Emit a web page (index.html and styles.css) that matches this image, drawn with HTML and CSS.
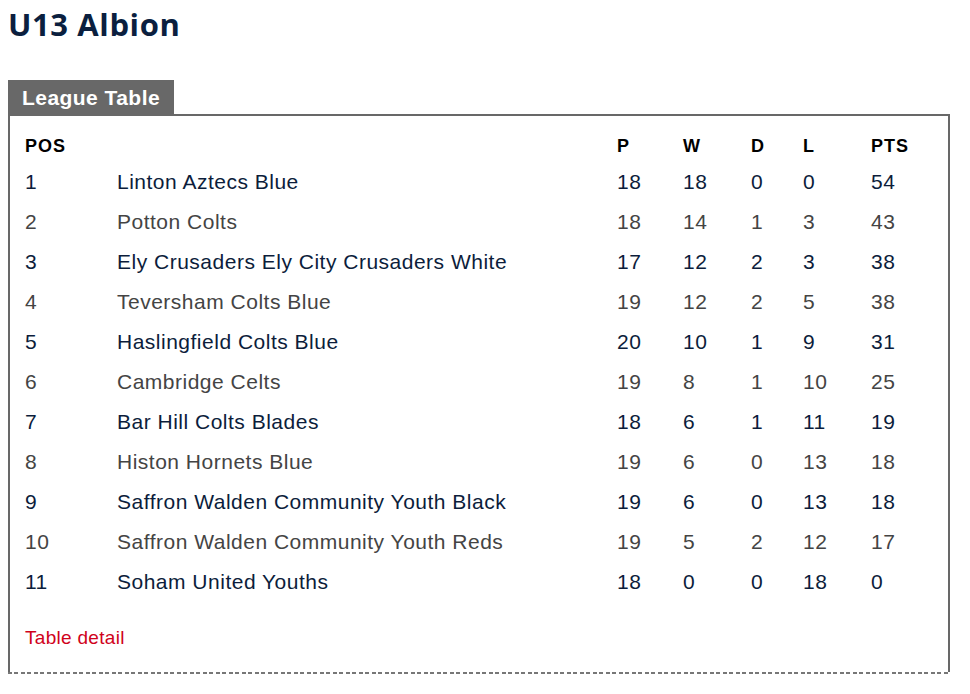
FILE: index.html
```html
<!DOCTYPE html>
<html lang="en">
<head>
<meta charset="utf-8">
<title>U13 Albion</title>
<link rel="stylesheet" href="styles.css">
</head>
<body>
<h1 class="page-title">U13 Albion</h1>
<section class="league">
  <div class="league-tab">League Table</div>
  <div class="league-box">
    <table class="league-table">
      <colgroup>
        <col class="c-pos"><col class="c-team"><col class="c-p"><col class="c-w"><col class="c-d"><col class="c-l"><col class="c-pts">
      </colgroup>
      <thead>
        <tr><th>POS</th><th></th><th>P</th><th>W</th><th>D</th><th>L</th><th>PTS</th></tr>
      </thead>
      <tbody>
        <tr class="odd"><td>1</td><td>Linton Aztecs Blue</td><td>18</td><td>18</td><td>0</td><td>0</td><td>54</td></tr>
        <tr class="even"><td>2</td><td>Potton Colts</td><td>18</td><td>14</td><td>1</td><td>3</td><td>43</td></tr>
        <tr class="odd"><td>3</td><td>Ely Crusaders Ely City Crusaders White</td><td>17</td><td>12</td><td>2</td><td>3</td><td>38</td></tr>
        <tr class="even"><td>4</td><td>Teversham Colts Blue</td><td>19</td><td>12</td><td>2</td><td>5</td><td>38</td></tr>
        <tr class="odd"><td>5</td><td>Haslingfield Colts Blue</td><td>20</td><td>10</td><td>1</td><td>9</td><td>31</td></tr>
        <tr class="even"><td>6</td><td>Cambridge Celts</td><td>19</td><td>8</td><td>1</td><td>10</td><td>25</td></tr>
        <tr class="odd"><td>7</td><td>Bar Hill Colts Blades</td><td>18</td><td>6</td><td>1</td><td>11</td><td>19</td></tr>
        <tr class="even"><td>8</td><td>Histon Hornets Blue</td><td>19</td><td>6</td><td>0</td><td>13</td><td>18</td></tr>
        <tr class="odd"><td>9</td><td>Saffron Walden Community Youth Black</td><td>19</td><td>6</td><td>0</td><td>13</td><td>18</td></tr>
        <tr class="even"><td>10</td><td>Saffron Walden Community Youth Reds</td><td>19</td><td>5</td><td>2</td><td>12</td><td>17</td></tr>
        <tr class="odd"><td>11</td><td>Soham United Youths</td><td>18</td><td>0</td><td>0</td><td>18</td><td>0</td></tr>
      </tbody>
    </table>
    <a class="detail-link" href="#">Table detail</a>
  </div>
  <div class="league-dash"></div>
</section>
</body>
</html>
```

FILE: styles.css
```css
html, body {
  margin: 0;
  padding: 0;
  background: #ffffff;
}

body {
  padding: 0 8px;
  font-family: "Liberation Sans", Arial, sans-serif;
}

.page-title {
  margin: 4px 0 0;
  font-family: "Open Sans", "Liberation Sans", sans-serif;
  font-weight: 700;
  font-size: 31px;
  line-height: 40px;
  color: #0b1f3f;
  letter-spacing: 0.6px;
}

.league {
  margin-top: 36px;
  margin-right: 12px;
}

.league-tab {
  display: inline-block;
  vertical-align: top;
  background: #686868;
  color: #ffffff;
  font-weight: 700;
  font-size: 21px;
  line-height: 33px;
  padding: 1px 14px 0 14px;
  letter-spacing: 0.45px;
}

.league-box {
  border: 2px solid #686868;
  border-bottom: 0;
  padding: 9px 15px 23px 15px;
}

.league-dash {
  height: 2px;
  background: repeating-linear-gradient(90deg, #777777 0 4px, transparent 4px 6.5px);
}

.league-table {
  border-collapse: collapse;
  table-layout: fixed;
  width: 910px;
}

.c-pos { width: 92px; }
.c-team { width: 500px; }
.c-p { width: 66px; }
.c-w { width: 68px; }
.c-d { width: 52px; }
.c-l { width: 68px; }
.c-pts { width: 64px; }

.league-table th {
  text-align: left;
  padding: 6px 0 0 0;
  height: 31px;
  vertical-align: middle;
  font-weight: 700;
  font-size: 18px;
  letter-spacing: 1px;
  color: #000000;
}

.league-table td {
  padding: 0;
  height: 40px;
  vertical-align: middle;
  font-size: 21px;
  letter-spacing: 0.5px;
  white-space: nowrap;
}

.league-table tr.odd td {
  color: #0c1d3b;
}

.league-table tr.even td {
  color: #444444;
}

.detail-link {
  display: block;
  margin-top: 25px;
  font-size: 19px;
  line-height: 22px;
  letter-spacing: 0.3px;
  color: #d0021b;
  text-decoration: none;
}
```
